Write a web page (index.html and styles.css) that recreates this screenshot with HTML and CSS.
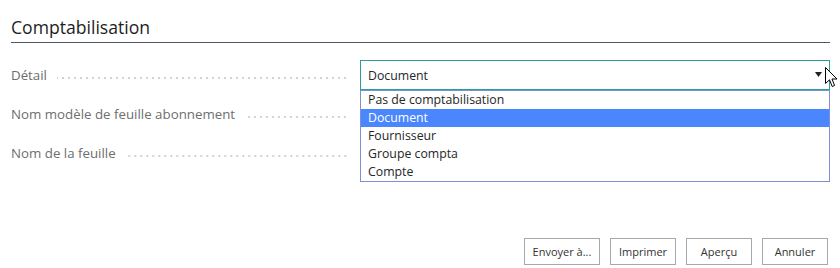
FILE: index.html
```html
<!DOCTYPE html>
<html lang="fr">
<head>
<meta charset="utf-8">
<title>Comptabilisation</title>
<link rel="stylesheet" href="styles.css">
</head>
<body>
<div class="page">
  <h2 class="title">Comptabilisation</h2>
  <div class="form">
    <div class="row">
      <div class="label"><span class="text">Détail</span><span class="leader"></span></div>
      <div class="field">
        <div class="select">
          <span>Document</span>
          <svg class="arrow" width="7" height="5" viewBox="0 0 7 5"><polygon points="0,0 7,0 3.5,5" fill="#222"/></svg>
        </div>
        <ul class="dropdown">
          <li>Pas de comptabilisation</li>
          <li class="selected">Document</li>
          <li>Fournisseur</li>
          <li>Groupe compta</li>
          <li>Compte</li>
        </ul>
        <svg class="cursor" width="13" height="21" viewBox="0 0 13 21"><polygon points="0.5,0.5 0.5,16.5 4.5,12.8 7.2,19.5 9.6,18.5 7,12 12,12" fill="#fff" stroke="#000" stroke-width="1" stroke-linejoin="miter"/></svg>
      </div>
    </div>
    <div class="row">
      <div class="label"><span class="text">Nom modèle de feuille abonnement</span><span class="leader"></span></div>
      <div class="field"></div>
    </div>
    <div class="row">
      <div class="label"><span class="text">Nom de la feuille</span><span class="leader"></span></div>
      <div class="field"></div>
    </div>
  </div>
  <div class="actions">
    <button class="btn btn-wide">Envoyer à...</button>
    <button class="btn">Imprimer</button>
    <button class="btn">Aperçu</button>
    <button class="btn">Annuler</button>
  </div>
</div>
</body>
</html>
```

FILE: styles.css
```css
* { box-sizing: border-box; }
html, body { margin: 0; padding: 0; background: #fff; }
body {
  font-family: "Open Sans", "Noto Sans", sans-serif;
  color: #212121;
  width: 840px;
  height: 268px;
  overflow: hidden;
}
.page {
  padding: 0 10px 0 11px;
  display: flex;
  flex-direction: column;
  height: 268px;
}
.title {
  margin: 14px 0 0 0;
  font-size: 17.6px;
  font-weight: 400;
  line-height: 27px;
  height: 29px;
  border-bottom: 1px solid #505666;
  color: #1e1e1e;
}
.form {
  margin-top: 17px;
  display: flex;
  flex-direction: column;
  gap: 9px;
}
.row {
  display: grid;
  grid-template-columns: 339px 470px;
  column-gap: 10px;
  height: 30px;
}
.label {
  display: flex;
  align-items: center;
  font-size: 13.3px;
  color: #6e6e6e;
  min-width: 0;
}
.label .text { white-space: nowrap; }
.leader {
  flex: 1;
  height: 2px;
  margin-left: 10px;
  margin-top: 5px;
  background-image: linear-gradient(to right, #d2d2d2 2px, transparent 2px);
  background-size: 6px 2px;
  background-repeat: repeat-x;
  background-position: right center;
}
.field { position: relative; }
.select {
  height: 30px;
  border: 1px solid #2a9d94;
  display: flex;
  align-items: center;
  justify-content: space-between;
  padding: 0 7px 0 7px;
  font-size: 12.3px;
  color: #262626;
}
.arrow { margin-top: -2px; }
.dropdown {
  position: absolute;
  left: 0;
  top: 30px;
  width: 470px;
  margin: 0;
  padding: 0;
  list-style: none;
  background: #fff;
  border: 1px solid #7f8fd6;
  z-index: 2;
}
.dropdown li {
  height: 18px;
  line-height: 18px;
  padding-left: 7px;
  font-size: 12.3px;
  color: #262626;
}
.dropdown li.selected {
  background: #4a86fd;
  color: #fff;
}
.cursor {
  position: absolute;
  left: 465px;
  top: 7px;
  z-index: 3;
}
.actions {
  margin-top: auto;
  margin-bottom: 3px;
  display: flex;
  justify-content: flex-end;
  gap: 10px;
  padding-right: 2px;
}
.btn {
  font-family: inherit;
  font-size: 11px;
  color: #333;
  background: #fff;
  border: 1px solid #a8a8a8;
  height: 27px;
  width: 66px;
  padding: 0;
}
.btn-wide { width: 76px; }
```
